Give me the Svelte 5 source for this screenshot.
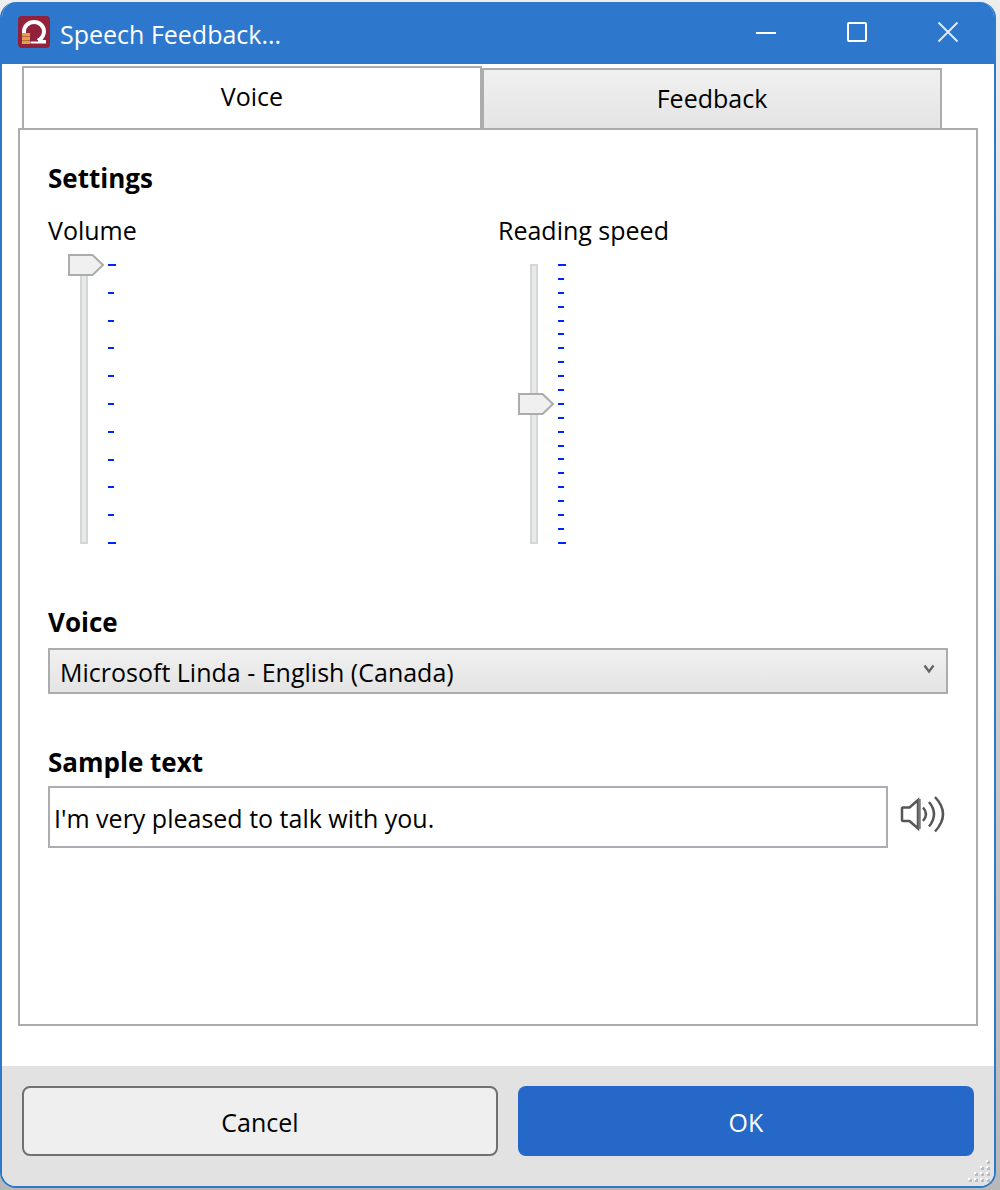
<script>
  let tab = $state('voice');
  let volume = $state(100);
  let speed = $state(0);
  let voice = $state('Microsoft Linda - English (Canada)');
  let sample = $state("I'm very pleased to talk with you.");
  const volumeTicks = Array.from({ length: 11 });
  const speedTicks = Array.from({ length: 21 });
</script>

<div class="window">
  <header class="titlebar">
    <svg class="logo" viewBox="0 0 32 32" aria-hidden="true">
      <rect width="32" height="32" rx="4" fill="#92213b" />
      <path d="M6 17V15.500A10 9.500 0 0 1 26 15.500C26 19.500 24 22 20.500 25" fill="none" stroke="#fff" stroke-width="4" />
      <path d="M12.500 25.500H21L19 23L21.500 21.500L25 24H28V27.500H12.500Z" fill="#fff" />
      <path d="M4 17h8v3H4zM4 21h8v3H4zM4 25h8v3H4z" fill="#e0a050" />
      <path d="M4 20h8v1H4zM4 24h8v1H4z" fill="#b9693f" />
    </svg>
    <h1>Speech Feedback...</h1>
    <div class="controls">
      <button type="button" aria-label="Minimize">
        <svg viewBox="0 0 22 22"><path d="M1 12H21" stroke="#fff" stroke-width="2" /></svg>
      </button>
      <button type="button" aria-label="Maximize">
        <svg viewBox="0 0 22 22"><rect x="2" y="2" width="18" height="18" rx="1" fill="none" stroke="#fff" stroke-width="2" /></svg>
      </button>
      <button type="button" aria-label="Close">
        <svg viewBox="0 0 22 22"><path d="M1.500 1.500L20.500 20.500M20.500 1.500L1.500 20.500" stroke="#e4eefa" stroke-width="1.800" /></svg>
      </button>
    </div>
  </header>

  <main>
    <div class="tabs" role="tablist">
      <button type="button" role="tab" aria-selected={tab === 'voice'} class:active={tab === 'voice'} onclick={() => (tab = 'voice')}>Voice</button>
      <button type="button" role="tab" aria-selected={tab === 'feedback'} class:active={tab === 'feedback'} onclick={() => (tab = 'feedback')}>Feedback</button>
    </div>

    <section class="panel" role="tabpanel">
      <h2>Settings</h2>
      <div class="sliders">
        <div class="field">
          <label for="volume">Volume</label>
          <div class="slider">
            <span class="rail"></span>
            <input id="volume" type="range" min="0" max="100" bind:value={volume} />
            <div class="ticks">{#each volumeTicks as _}<i></i>{/each}</div>
          </div>
        </div>
        <div class="field">
          <label for="speed">Reading speed</label>
          <div class="slider">
            <span class="rail"></span>
            <input id="speed" type="range" min="-10" max="10" bind:value={speed} />
            <div class="ticks">{#each speedTicks as _}<i></i>{/each}</div>
          </div>
        </div>
      </div>

      <h2><label for="voice">Voice</label></h2>
      <div class="combo">
        <select id="voice" bind:value={voice}>
          <option>Microsoft Linda - English (Canada)</option>
        </select>
        <svg viewBox="0 0 12 10" aria-hidden="true"><path d="M1.500 1.500L6 7.500L10.500 1.500" fill="none" stroke="#666" stroke-width="2.400" /></svg>
      </div>

      <h2><label for="sample">Sample text</label></h2>
      <div class="sample">
        <input id="sample" type="text" bind:value={sample} />
        <button type="button" aria-label="Play sample">
          <svg viewBox="0 0 46 40" fill="none" stroke="#555" stroke-width="2.500">
            <path d="M3 13.500Q2 13.500 2 15V25.500Q2 27 3 27H9.500L18 34.500V6L9.500 13.500Z" />
            <path d="M19.500 5V35" stroke="#777" />
            <path d="M23 13.500Q29 20 23 27M29 8Q39 20 29 32.500M35 3Q51 20 35 37.500" />
          </svg>
        </button>
      </div>
    </section>
  </main>

  <footer>
    <button type="button" class="cancel">Cancel</button>
    <button type="button" class="ok">OK</button>
    <svg class="grip" viewBox="0 0 24 24" aria-hidden="true">
      {#each [[20, 2], [14, 8], [20, 8], [8, 14], [14, 14], [20, 14], [2, 20], [8, 20], [14, 20], [20, 20]] as [x, y]}
        <rect x={x} y={y} width="3" height="3" fill="#b4bccf" />
        <rect x={x - 1} y={y - 1} width="2" height="2" fill="#fff" />
      {/each}
    </svg>
  </footer>
</div>

<style>
  :global(body) {
    margin: 0;
    background: linear-gradient(#eeeeee, #d0d0d0 50%, #b8b8b8);
  }
  :global(#app) {
    min-height: 100vh;
    display: flex;
  }
  .window {
    flex: 1;
    box-sizing: border-box;
    margin: 2px 4px 2px 0;
    border: 2px solid #2d78cd;
    border-top: 0;
    border-radius: 16px;
    overflow: hidden;
    display: flex;
    flex-direction: column;
    background: #fff;
    color: #000;
    font: 25px/34px "Segoe UI", "Open Sans", "Noto Sans", sans-serif;
  }
  button, input, select {
    font: inherit;
    color: inherit;
    margin: 0;
    box-sizing: border-box;
  }
  h1, h2 {
    margin: 0;
  }
  h1 {
    flex: 1;
    font-size: 25px;
    font-weight: 400;
    padding-top: 2px;
  }
  h2 {
    font-size: 26px;
  }
  .titlebar {
    display: flex;
    align-items: center;
    height: 62px;
    padding: 0 1px 0 16px;
    gap: 10px;
    background: #2d78cd;
    color: #fff;
  }
  .logo {
    width: 32px;
    height: 32px;
    padding-bottom: 2px;
  }
  .controls {
    display: flex;
    align-self: stretch;
  }
  .controls button {
    width: 91px;
    padding: 0 0 2px;
    border: 0;
    background: none;
  }
  .controls svg {
    display: block;
    width: 22px;
    height: 22px;
    margin: 0 auto;
  }
  main {
    flex: 1;
    display: flex;
    flex-direction: column;
    padding: 2px 16px 40px;
  }
  .tabs {
    display: flex;
    align-items: flex-end;
    padding: 0 36px 0 4px;
  }
  .tabs button {
    flex: 1;
    height: 60px;
    padding: 0 0 2px;
    border: 2px solid #acacac;
    border-bottom: 0;
    background: linear-gradient(#f0f0f0, #e4e4e4);
  }
  .tabs button.active {
    height: 62px;
    padding-bottom: 4px;
    background: #fff;
  }
  .panel {
    flex: 1;
    padding: 31px 28px;
    border: 2px solid #acacac;
  }
  .sliders {
    display: grid;
    grid-template-columns: 1fr 1fr;
    margin: 18px 0 51px;
  }
  .field label {
    display: block;
    margin-bottom: 7px;
  }
  .slider {
    display: grid;
    grid-template-columns: 36px 8px;
    column-gap: 4px;
    padding-left: 20px;
  }
  .rail {
    grid-area: 1 / 1;
    width: 8px;
    margin: 10px 12px;
    box-sizing: border-box;
    border: 2px solid #d6d6d6;
    background: #e7eaea;
  }
  .slider input {
    grid-area: 1 / 1;
    appearance: none;
    writing-mode: vertical-lr;
    direction: rtl;
    width: 36px;
    height: 300px;
    background: none;
  }
  .slider input::-webkit-slider-thumb {
    appearance: none;
    width: 36px;
    height: 22px;
    background: url("data:image/svg+xml,%3Csvg xmlns='http://www.w3.org/2000/svg' width='36' height='22'%3E%3Cpath d='M1 1H24.500L35 11L24.500 21H1Z' fill='%23f0f0f0' stroke='%23acacac' stroke-width='2'/%3E%3C/svg%3E");
  }
  .ticks {
    grid-area: 1 / 2;
    display: flex;
    flex-direction: column;
    justify-content: space-between;
    padding: 10px 0;
  }
  .ticks i {
    width: 6px;
    height: 2px;
    background: #0026ff;
  }
  .ticks i:first-child, .ticks i:last-child {
    width: 8px;
  }
  .combo {
    display: grid;
    align-items: center;
    margin: 9px 0 51px;
  }
  .combo select {
    grid-area: 1 / 1;
    width: 100%;
    height: 46px;
    padding: 2px 40px 0 10px;
    appearance: none;
    border: 2px solid #acacac;
    border-radius: 0;
    background: linear-gradient(#f0f0f0, #e4e4e4);
  }
  .combo svg {
    grid-area: 1 / 1;
    justify-self: end;
    width: 12px;
    height: 10px;
    margin: 0 13px 4px 0;
    pointer-events: none;
  }
  .sample {
    display: flex;
    align-items: center;
    gap: 12px;
    margin-top: 7px;
  }
  .sample input {
    flex: 1;
    min-width: 0;
    height: 62px;
    padding: 2px 4px 0;
    border: 2px solid #abadb3;
    border-radius: 0;
    background: #fff;
  }
  .sample button {
    padding: 0 0 6px;
    margin-right: 2px;
    border: 0;
    background: none;
  }
  .sample svg {
    display: block;
    width: 46px;
    height: 40px;
  }
  footer {
    position: relative;
    display: grid;
    grid-template-columns: 476fr 456fr;
    gap: 20px;
    padding: 20px 20px 30px;
    background: #e2e2e2;
  }
  footer button {
    height: 70px;
    padding: 2px 0 0;
    border-radius: 8px;
  }
  .cancel {
    border: 2px solid #707070;
    background: #efefef;
  }
  .ok {
    border: 0;
    background: #2568c8;
    color: #fff;
  }
  .grip {
    position: absolute;
    right: 3px;
    bottom: 3px;
    width: 24px;
    height: 24px;
  }
</style>
